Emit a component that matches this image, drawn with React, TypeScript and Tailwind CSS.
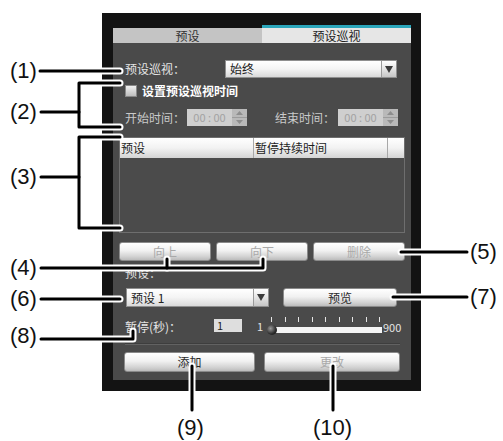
import React from 'react';

const btn =
  'flex items-center justify-center rounded-[3px] border border-[#8a8a8a] bg-[linear-gradient(to_bottom,#ffffff,#f1f1f1_45%,#d2d2d2_80%,#bcbcbc)] text-[12px] leading-none';

const Button: React.FC<{ label: string; w: string; h: string; disabled?: boolean; className?: string }> = ({
  label,
  w,
  h,
  disabled,
  className = '',
}) => (
  <div className={`${btn} ${w} ${h} ${disabled ? 'text-[#a9a9a9]' : 'text-[#2a2a2a]'} ${className}`}>{label}</div>
);

const Arrow: React.FC = () => (
  <div className="flex h-full w-[15px] items-center justify-center border-l border-[#9a9a9a] bg-[linear-gradient(to_bottom,#ffffff,#e4e4e4_50%,#c6c6c6)]">
    <svg width="8" height="7" viewBox="0 0 8 7">
      <path d="M0 0 H8 L4 7 Z" fill="#3a3a3a" />
    </svg>
  </div>
);

const Select: React.FC<{ value: string; w: string; className?: string }> = ({ value, w, className = '' }) => (
  <div
    className={`flex h-full ${w} items-stretch border border-[#8f8f8f] bg-[linear-gradient(to_bottom,#ffffff,#f4f4f4_50%,#d9d9d9)] ${className}`}
  >
    <div className="flex flex-1 items-center pl-[4px] text-[12px] leading-none text-[#222]">{value}</div>
    <Arrow />
  </div>
);

const TimeBox: React.FC = () => (
  <div className="flex h-[17px] items-stretch">
    <div className="flex w-[45px] items-center justify-center bg-[#cfcfcf] text-[11px] leading-none text-[#a2a2a2]">
      00 : 00
    </div>
    <div className="flex w-[15px] flex-col bg-[#b9b9b9]">
      <div className="flex flex-1 items-center justify-center border-b border-[#9c9c9c]">
        <svg width="7" height="4" viewBox="0 0 7 4">
          <path d="M0 4 L3.5 0 L7 4 Z" fill="#8e8e8e" />
        </svg>
      </div>
      <div className="flex flex-1 items-center justify-center">
        <svg width="7" height="4" viewBox="0 0 7 4">
          <path d="M0 0 L3.5 4 L7 0 Z" fill="#8e8e8e" />
        </svg>
      </div>
    </div>
  </div>
);

const callouts = [
  'M40 71 H120',
  'M41 112 H79',
  'M120 83 H79 V127 H120',
  'M41 177 H79',
  'M120 137 H79 V228 H120',
  'M41 268 H263 V259',
  'M167 268 V259',
  'M401 252 H467',
  'M41 299 H120',
  'M393 297 H467',
  'M41 339 H133 V331',
  'M192 366 V410',
  'M333 366 V410',
];

const labels = [
  { t: '(1)', cls: 'left-[10px] top-[60px]' },
  { t: '(2)', cls: 'left-[10px] top-[101px]' },
  { t: '(3)', cls: 'left-[10px] top-[166px]' },
  { t: '(4)', cls: 'left-[10px] top-[257px]' },
  { t: '(6)', cls: 'left-[10px] top-[288px]' },
  { t: '(8)', cls: 'left-[10px] top-[325px]' },
  { t: '(5)', cls: 'left-[470px] top-[241px]' },
  { t: '(7)', cls: 'left-[470px] top-[286px]' },
  { t: '(9)', cls: 'left-[177px] top-[417px]' },
  { t: '(10)', cls: 'left-[313px] top-[417px]' },
];

export default function App() {
  return (
    <div className="relative h-[441px] w-[503px] overflow-hidden bg-white font-['Noto_Sans_CJK_SC',sans-serif]">
      {/* dialog */}
      <div className="ml-[102px] mt-[13px] flex h-[378px] w-[319px] flex-col bg-[#131313] pl-[11px] pt-[12px]">
        {/* tabs */}
        <div className="flex h-[18px] w-[298px] items-end">
          <div className="flex h-[15px] w-[149px] items-center justify-center bg-[#c4c4c4] text-[12px] leading-none text-[#333]">
            预设
          </div>
          <div className="flex h-[18px] w-[149px] items-center justify-center border-t-[3px] border-[#2ba6bb] bg-[#e6e6e6] text-[12px] leading-none text-[#222]">
            预设巡视
          </div>
        </div>

        <div className="flex h-[337px] w-[298px] flex-col bg-[#4a4a4a] text-[12px] leading-none text-[#e4e4e4]">
          {/* (1) */}
          <div className="mt-[17px] flex h-[18px] items-center">
            <span className="w-[112px] pl-[12px]">预设巡视：</span>
            <Select value="始终" w="w-[172px]" />
          </div>

          {/* (2) */}
          <div className="ml-[12px] mt-[7px] flex h-[12px] items-center gap-[5px]">
            <div className="h-[12px] w-[12px] border border-[#888] bg-[linear-gradient(to_bottom,#f0f0f0,#bdbdbd)]" />
            <span className="font-bold text-white">设置预设巡视时间</span>
          </div>
          <div className="mt-[12px] flex h-[17px] items-center text-[#c9c9c9]">
            <span className="w-[74px] pl-[12px]">开始时间：</span>
            <TimeBox />
            <span className="ml-[28px] w-[63px]">结束时间：</span>
            <TimeBox />
          </div>

          {/* (3) */}
          <div className="ml-[6px] mt-[11px] flex h-[96px] w-[286px] flex-col border border-[#6e6e6e] bg-[#4b4b4b]">
            <div className="flex h-[20px] bg-[linear-gradient(to_bottom,#ffffff,#f2f2f2_50%,#d4d4d4)] text-[#1e1e1e]">
              <div className="flex w-[134px] items-center border-r border-[#a8a8a8] pl-[1px]">预设</div>
              <div className="flex w-[134px] items-center border-r border-[#a8a8a8] pl-[1px]">暂停持续时间</div>
              <div className="flex-1" />
            </div>
          </div>

          {/* (4) (5) */}
          <div className="ml-[6px] mt-[9px] flex h-[19px] gap-[5px]">
            <Button label="向上" w="w-[92px]" h="h-[19px]" disabled />
            <Button label="向下" w="w-[92px]" h="h-[19px]" disabled />
            <Button label="删除" w="w-[92px]" h="h-[19px]" disabled />
          </div>

          {/* (6) (7) */}
          <div className="ml-[12px] mt-[5px] flex h-[14px] items-center">预设：</div>
          <div className="mt-[8px] flex h-[19px] items-stretch">
            <Select value="预设 1" w="w-[143px]" className="ml-[13px]" />
            <Button label="预览" w="w-[114px]" h="h-[19px]" className="ml-[14px]" />
          </div>

          {/* (8) */}
          <div className="mt-[10px] flex h-[17px] items-end">
            <span className="mb-[1px] w-[101px] pl-[12px]">暂停(秒)：</span>
            <div className="mb-[2px] flex h-[13px] w-[28px] items-center bg-[#dedede] pl-[3px] text-[11px] text-[#222]">
              1
            </div>
            <span className="mb-[2px] ml-[15px] w-[10px] text-[11px]">1</span>
            <div className="flex w-[115px] flex-col">
              <div className="flex h-[5px] justify-between pl-[4px] pr-[2px]">
                {Array.from({ length: 9 }).map((_, i) => (
                  <div key={i} className="h-[5px] w-px bg-[#e6e6e6]" />
                ))}
              </div>
              <div className="relative mb-[1px] ml-[6px] mt-[5px] h-[6px] bg-[#f4f4f4]">
                <div className="absolute -left-[6px] -top-[2px] h-[10px] w-[10px] rounded-full bg-[radial-gradient(circle_at_35%_35%,#9a9a9a,#2a2a2a_60%,#111)]" />
              </div>
            </div>
            <span className="mb-[1px] ml-[1px] text-[11px]">900</span>
          </div>

          <div className="ml-[12px] mt-[9px] h-[2px] w-[275px] border-t border-b border-t-[#3e3e3e] border-b-[#626262]" />

          {/* (9) (10) */}
          <div className="mt-[7px] flex h-[20px]">
            <Button label="添加" w="w-[131px]" h="h-[20px]" className="ml-[11px]" />
            <Button label="更改" w="w-[136px]" h="h-[20px]" className="ml-[9px]" disabled />
          </div>
        </div>
      </div>

      {/* callout lines */}
      <svg className="pointer-events-none absolute left-0 top-0" width="503" height="441" viewBox="0 0 503 441">
        {callouts.map((d, i) => (
          <path key={`h${i}`} d={d} fill="none" stroke="#ffffff" strokeWidth="7" strokeLinecap="round" strokeLinejoin="round" />
        ))}
        {callouts.map((d, i) => (
          <path key={`b${i}`} d={d} fill="none" stroke="#000000" strokeWidth="3" strokeLinecap="round" strokeLinejoin="round" />
        ))}
      </svg>

      {labels.map((l) => (
        <span
          key={l.t}
          className={`absolute ${l.cls} font-['Liberation_Sans',Arial,sans-serif] text-[22px] leading-[22px] text-[#111]`}
        >
          {l.t}
        </span>
      ))}
    </div>
  );
}
